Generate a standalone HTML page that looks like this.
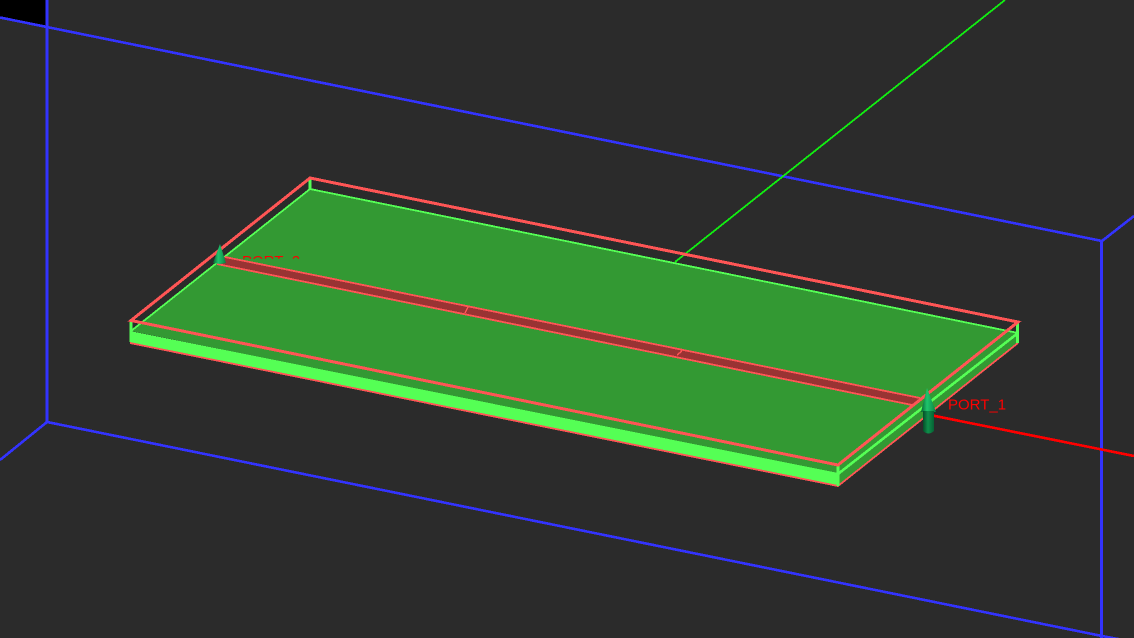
<!DOCTYPE html>
<html>
<head>
<meta charset="utf-8">
<style>
html,body{margin:0;padding:0;width:1134px;height:638px;overflow:hidden;background:#2b2b2b}
svg{display:block;position:absolute;left:0;top:0}
text{font-family:"Liberation Sans",sans-serif;font-size:15px;fill:#ff0000}
</style>
</head>
<body>
<svg width="1134" height="638" viewBox="0 0 1134 638" xmlns="http://www.w3.org/2000/svg">
<defs>
<linearGradient id="g" x1="0" x2="1" y1="0" y2="0">
<stop offset="0" stop-color="#06602f"/>
<stop offset="0.4" stop-color="#1fc56c"/>
<stop offset="0.75" stop-color="#12a055"/>
<stop offset="1" stop-color="#0a7a40"/>
</linearGradient>
<linearGradient id="h" x1="0" x2="1" y1="0" y2="0">
<stop offset="0" stop-color="#054d28"/>
<stop offset="0.45" stop-color="#0f8f4b"/>
<stop offset="1" stop-color="#066234"/>
</linearGradient>
<clipPath id="c2"><rect x="238" y="250" width="70" height="8.7"/></clipPath>
</defs>
<rect width="1134" height="638" fill="#2b2b2b"/>
<polygon points="0,0 47,0 47,26 0,17" fill="#000"/>
<g shape-rendering="crispEdges" fill="none">
<g stroke="#3333ff" stroke-width="2.6">
<path d="M0 17.5L1102 241"/>
<path d="M47 0V422"/>
<path d="M47 422L1102 636L1134 642"/>
<path d="M47 422L0 460"/>
<path d="M1101.5 241V638"/>
<path d="M1102 241L1134 216"/>
</g>
<path d="M1005 0L675 262" stroke="#11ee11" stroke-width="1.8"/>
<path d="M930 415L1134 456" stroke="#ff0000" stroke-width="2.6"/>
<polygon points="310,189 1018,333 838,474 131,331" fill="#339933"/>
<polygon points="838,474 1018,333 1018,343 838,486" fill="#339933"/>
<polygon points="130,331 838,473 838,486 130,343" fill="#55ff55"/>
<path d="M130 343L838 486L1018 343" stroke="#ff5555" stroke-width="1.8"/>
<path d="M131 331L310 189L1018 333" stroke="#55ff55" stroke-width="1.8"/>
<path d="M838 474L1018 333" stroke="#55ff55" stroke-width="2.6"/>
<path d="M310 178V189M131 320V342M838 464V486M1017.5 322V343" stroke="#55ff55" stroke-width="3.2"/>
<polygon points="225,257 920,398 912,405 217,264" fill="#993333"/>
<path d="M225 257L920 398M217 264L912 405" stroke="#ff5555" stroke-width="1.8"/>
<path d="M468 307L465 313M682 351L677 355" stroke="#ff5555" stroke-width="1.4"/>
<path d="M310 178L1018 322L838 465L131 320.5Z" stroke="#ff5555" stroke-width="3"/>
</g>
<text x="242" y="266" clip-path="url(#c2)">PORT_2</text>
<text x="948" y="409.5">PORT_1</text>
<polygon points="220,244 226,263 220,264 213,263" fill="url(#g)"/>
<polygon points="927,388 936,412 921,412" fill="url(#g)"/>
<path d="M923 411H934V431Q928.5 436 923 431Z" fill="url(#h)"/>
</svg>
</body>
</html>
